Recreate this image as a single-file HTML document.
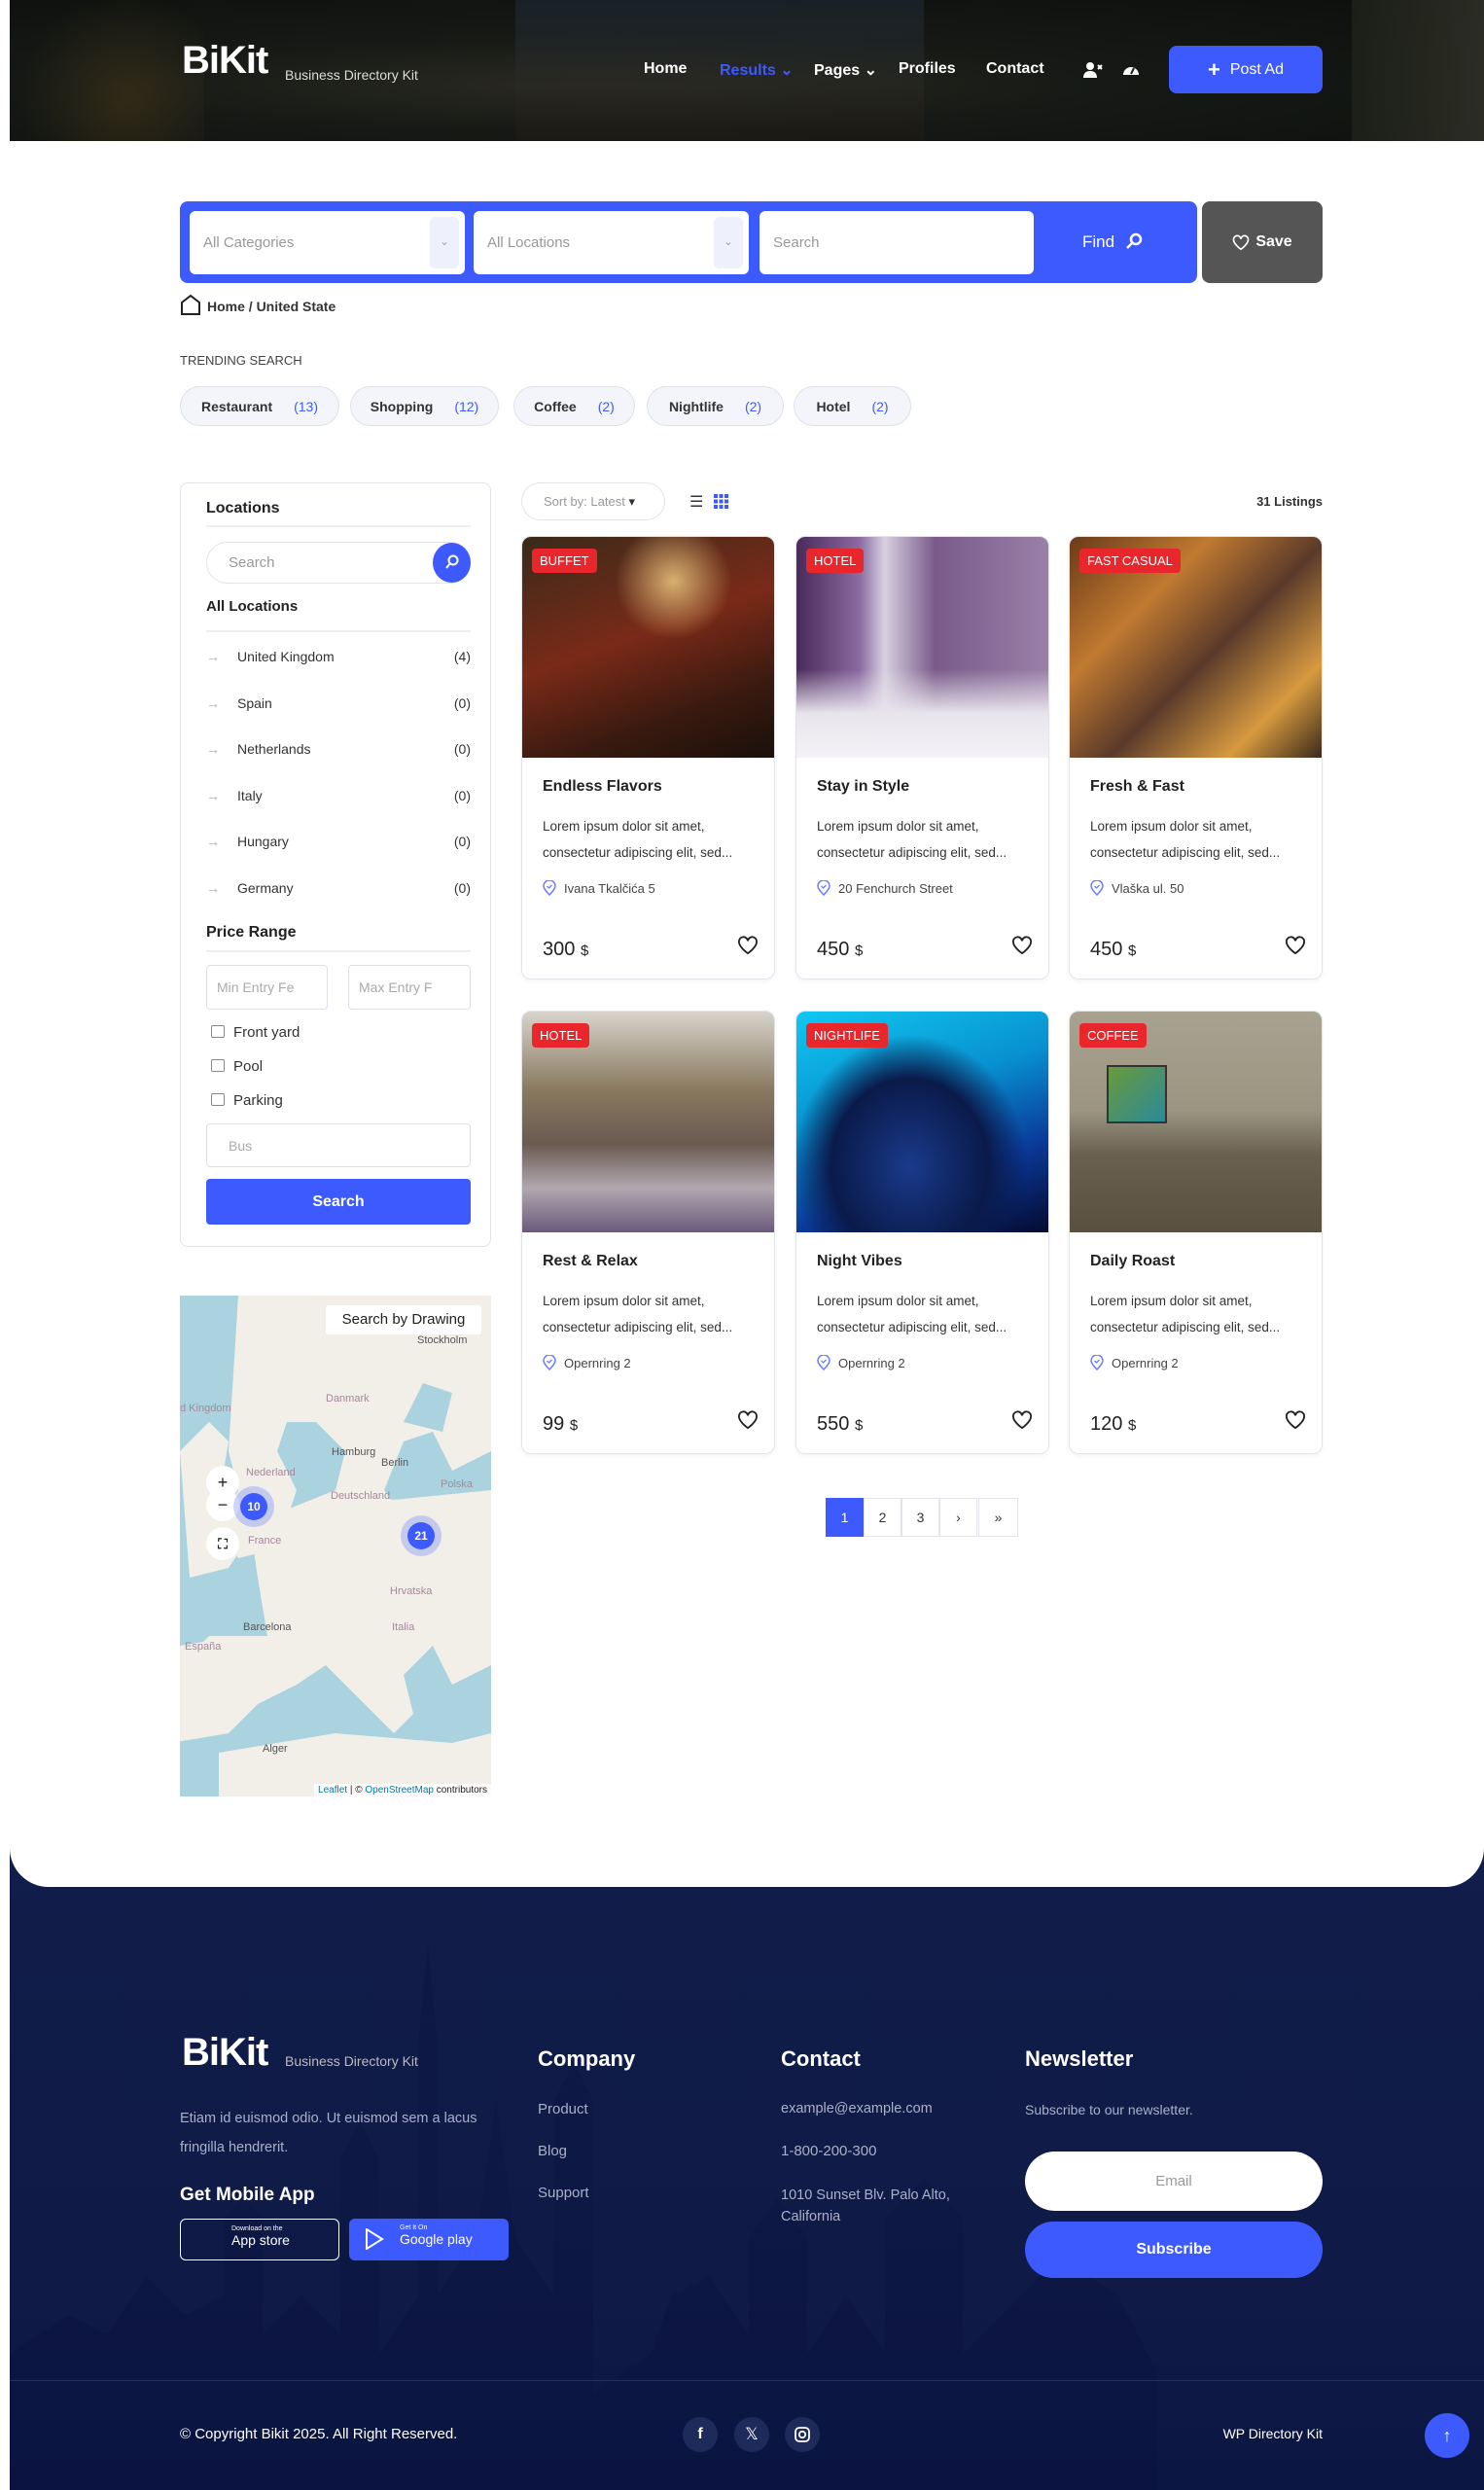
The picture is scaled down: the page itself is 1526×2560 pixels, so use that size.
<!DOCTYPE html>
<html><head><meta charset="utf-8"><style>
*{box-sizing:border-box;margin:0;padding:0}
body{width:1526px;height:2560px;position:relative;background:#fff;font-family:"Liberation Sans",sans-serif;color:#222;overflow:hidden}
.a{position:absolute}
.hdr{left:10px;top:0;width:1516px;height:145px;background:radial-gradient(ellipse at 40% 60%,#2a2a22 0%,#161915 40%,#0c0f0d 100%);overflow:hidden}
.nav{color:#fff;font-weight:bold;font-size:16px;top:62px}
.btn{background:#3d5afe;color:#fff;border-radius:8px;font-weight:bold;display:flex;align-items:center;justify-content:center}
.inp{background:#fff;border-radius:6px;color:#999;font-size:15px;padding-left:14px;display:flex;align-items:center}
.pill{top:397px;height:41px;border:1px solid #dde1ea;background:#f3f5fb;border-radius:21px;font-size:14px;font-weight:bold;color:#333;display:flex;align-items:center;justify-content:center;gap:22px}
.pill b{color:#3d5afe;font-weight:normal}
.side{left:185px;top:496px;width:320px;height:786px;border:1px solid #e2e4ea;border-radius:8px}
.h4{font-weight:bold;font-size:16px;color:#222}
.ln{height:2px;background:#eceef2;width:272px;left:212px}
.li{left:212px;width:272px;font-size:14px;color:#333;display:flex}
.li span:first-child{color:#aaa;width:32px}
.li span:last-child{margin-left:auto}
.card{width:261px;height:456px;border:1px solid #e2e4ea;border-radius:10px;overflow:hidden;box-shadow:0 2px 4px rgba(0,0,0,.05)}
.card .img{height:227px;position:relative}
.badge{position:absolute;left:10px;top:12px;background:#e8262b;color:#fff;font-size:13px;padding:5px 8px;border-radius:4px}
.card h3{position:absolute;left:21px;top:248px;font-size:16px;color:#222}
.card p{position:absolute;left:21px;top:284px;font-size:13.5px;color:#333;line-height:27px;width:230px}
.card .loc{position:absolute;left:21px;top:353px;font-size:13px;color:#444;display:flex;gap:8px;align-items:center}
.card .pr{position:absolute;left:21px;top:413px;font-size:20px;color:#222}
.card .pr small{font-size:15px}
.card .ht{position:absolute;right:16px;top:410px}
.pg{top:1540px;width:39px;height:40px;border:1px solid #e2e4ea;display:flex;align-items:center;justify-content:center;font-size:14px;color:#333}
.ft{color:#fff}
.fl{color:#aab0c8;font-size:15px}
</style></head><body>

<div class="a hdr">
 <div class="a" style="left:520px;top:0;width:420px;height:145px;background:linear-gradient(180deg,#1e2a36,#2a2924 60%,#1e1a14 100%);opacity:.6"></div>
 <div class="a" style="left:0;top:0;width:200px;height:145px;background:radial-gradient(circle at 60% 70%,#4a3c1a,transparent 70%);opacity:.5"></div>
 <div class="a" style="left:1380px;top:0;width:140px;height:145px;background:linear-gradient(90deg,#1e2218,#33332a);opacity:.8"></div>
</div>
<div class="a ft" style="left:187px;top:40px;font-size:40px;font-weight:bold;letter-spacing:-1px">BiKit</div>
<div class="a" style="left:293px;top:69px;font-size:14px;color:#ddd">Business Directory Kit</div>
<div class="a nav" style="left:662px">Home</div>
<div class="a nav" style="left:740px;color:#3d5afe">Results ⌄</div>
<div class="a nav" style="left:837px">Pages ⌄</div>
<div class="a nav" style="left:924px">Profiles</div>
<div class="a nav" style="left:1014px">Contact</div>
<svg class="a" style="left:1113px;top:63px" width="22" height="18" viewBox="0 0 22 18"><circle cx="8" cy="5" r="4" fill="#fff"/><path d="M1 17c0-5 3-7 7-7s7 2 7 7z" fill="#fff"/><path d="M16 4l4 4M20 4l-4 4" stroke="#fff" stroke-width="2"/></svg>
<svg class="a" style="left:1153px;top:63px" width="20" height="18" viewBox="0 0 20 18"><path d="M2 14a8 8 0 1 1 16 0z" fill="#fff"/><path d="M10 13l3-6" stroke="#222" stroke-width="2"/></svg>
<div class="a btn" style="left:1202px;top:47px;width:158px;height:49px;font-size:16px;font-weight:normal"><span style="font-size:22px;font-weight:bold;margin-right:10px">+</span>Post Ad</div>

<div class="a" style="left:185px;top:207px;width:1046px;height:84px;background:#3d5afe;border-radius:8px"></div>
<div class="a inp" style="left:195px;top:217px;width:283px;height:65px">All Categories<span style="position:absolute;right:6px;top:6px;width:30px;height:53px;background:#eef0fb;border-radius:6px;text-align:center;line-height:53px;font-size:11px">⌄</span></div>
<div class="a inp" style="left:487px;top:217px;width:283px;height:65px">All Locations<span style="position:absolute;right:6px;top:6px;width:30px;height:53px;background:#eef0fb;border-radius:6px;text-align:center;line-height:53px;font-size:11px">⌄</span></div>
<div class="a inp" style="left:781px;top:217px;width:282px;height:65px">Search</div>
<div class="a ft" style="left:1113px;top:239px;font-size:17px">Find <svg width="18" height="18" viewBox="0 0 18 18" style="vertical-align:-3px;margin-left:6px"><circle cx="11" cy="7" r="5" fill="none" stroke="#fff" stroke-width="2.5"/><path d="M7 11l-5 5" stroke="#fff" stroke-width="2.5"/></svg></div>
<div class="a" style="left:1236px;top:207px;width:124px;height:84px;background:#555;border-radius:8px;color:#fff;font-weight:bold;font-size:16px;display:flex;align-items:center;justify-content:center;gap:6px"><svg width="18" height="17" viewBox="0 0 24 22"><path d="M12 20S2 13 2 7a5 5 0 0 1 10-1 5 5 0 0 1 10 1c0 6-10 13-10 13z" fill="none" stroke="#fff" stroke-width="2.2"/></svg>Save</div>

<svg class="a" style="left:185px;top:302px" width="22" height="22" viewBox="0 0 22 22"><path d="M2 21V9L11 2l9 7v12z" fill="none" stroke="#222" stroke-width="2"/></svg>
<div class="a" style="left:213px;top:307px;font-size:14px;font-weight:bold;color:#333">Home / United State</div>
<div class="a" style="left:185px;top:363px;font-size:13px;color:#444">TRENDING SEARCH</div>
<div class="a pill" style="left:185px;width:164px">Restaurant <b>(13)</b></div>
<div class="a pill" style="left:360px;width:153px">Shopping <b>(12)</b></div>
<div class="a pill" style="left:528px;width:125px">Coffee <b>(2)</b></div>
<div class="a pill" style="left:665px;width:141px">Nightlife <b>(2)</b></div>
<div class="a pill" style="left:816px;width:121px">Hotel <b>(2)</b></div>

<div class="a side"></div>
<div class="a h4" style="left:212px;top:514px">Locations</div>
<div class="a ln" style="top:540px"></div>
<div class="a" style="left:212px;top:557px;width:272px;height:43px;border:1px solid #e2e4ea;border-radius:22px;color:#999;font-size:15px;padding:12px 22px">Search</div>
<div class="a" style="left:445px;top:558px;width:39px;height:41px;border-radius:50%;background:#3d5afe"><svg width="39" height="41" viewBox="0 0 39 41"><circle cx="21" cy="18" r="4.5" fill="none" stroke="#fff" stroke-width="2"/><path d="M18 21l-4 5" stroke="#fff" stroke-width="2"/></svg></div>
<div class="a h4" style="left:212px;top:615px;font-size:15px">All Locations</div>
<div class="a ln" style="top:648px"></div>
<div class="a li" style="top:667px"><span>→</span><span>United Kingdom</span><span>(4)</span></div>
<div class="a li" style="top:715px"><span>→</span><span>Spain</span><span>(0)</span></div>
<div class="a li" style="top:762px"><span>→</span><span>Netherlands</span><span>(0)</span></div>
<div class="a li" style="top:810px"><span>→</span><span>Italy</span><span>(0)</span></div>
<div class="a li" style="top:857px"><span>→</span><span>Hungary</span><span>(0)</span></div>
<div class="a li" style="top:905px"><span>→</span><span>Germany</span><span>(0)</span></div>
<div class="a h4" style="left:212px;top:950px">Price Range</div>
<div class="a ln" style="top:977px"></div>
<div class="a" style="left:212px;top:992px;width:125px;height:46px;border:1px solid #dcdfe6;border-radius:4px;color:#aaa;font-size:14px;padding:14px 10px">Min Entry Fe</div>
<div class="a" style="left:358px;top:992px;width:126px;height:46px;border:1px solid #dcdfe6;border-radius:4px;color:#aaa;font-size:14px;padding:14px 10px">Max Entry F</div>
<div class="a" style="left:217px;top:1053px;font-size:15px;color:#333"><span style="display:inline-block;width:14px;height:13px;border:1px solid #888;border-radius:2px;vertical-align:-1px;margin-right:9px"></span>Front yard</div>
<div class="a" style="left:217px;top:1088px;font-size:15px;color:#333"><span style="display:inline-block;width:14px;height:13px;border:1px solid #888;border-radius:2px;vertical-align:-1px;margin-right:9px"></span>Pool</div>
<div class="a" style="left:217px;top:1123px;font-size:15px;color:#333"><span style="display:inline-block;width:14px;height:13px;border:1px solid #888;border-radius:2px;vertical-align:-1px;margin-right:9px"></span>Parking</div>
<div class="a" style="left:212px;top:1155px;width:272px;height:45px;border:1px solid #dcdfe6;border-radius:4px;color:#aaa;font-size:14px;padding:14px 22px">Bus</div>
<div class="a btn" style="left:212px;top:1212px;width:272px;height:47px;border-radius:4px;font-size:16px">Search</div>

<div class="a" style="left:185px;top:1332px;width:320px;height:515px;background:#aad3df;overflow:hidden">
<svg width="320" height="515" viewBox="0 0 320 515"><path d="M60 0h260v160l-40 20-20-40-30 10-20 50 20 30-40 10-30-40 10-40-30-30-30 0-10 30 20 40-20 60-40 10-20-30 20-40-10-40z" fill="#f2efe9"/><path d="M0 160l30-30 20 20-10 60 30 40-20 30-40 10z" fill="#f2efe9"/><path d="M70 220l40 0 50-20 60 10 100-10v180l-40 20-20-40-30 30 10 40-20 20-40-40-30-30-30 20-40 20-30 30-60 10v-70l40-40 60 0-10-60z" fill="#f2efe9"/><path d="M0 360l60-10 40 20-20 40-80 10z" fill="#f2efe9"/><path d="M40 470l120-20 120 10 40-10v75H40z" fill="#f2efe9"/><path d="M230 130l20-40 30 10-10 40z" fill="#aad3df"/></svg>
<div class="a" style="left:150px;top:10px;width:160px;height:30px;background:#fff;border-radius:3px;font-size:15px;text-align:center;line-height:30px">Search by Drawing</div>
<div class="a" style="left:244px;top:40px;font-size:11px;color:#555">Stockholm</div>
<div class="a" style="left:150px;top:100px;font-size:11px;color:#a8879a">Danmark</div>
<div class="a" style="left:0;top:110px;font-size:11px;color:#a8879a">d Kingdom</div>
<div class="a" style="left:156px;top:155px;font-size:11px;color:#555">Hamburg</div>
<div class="a" style="left:207px;top:166px;font-size:11px;color:#555">Berlin</div>
<div class="a" style="left:155px;top:200px;font-size:11px;color:#a8879a">Deutschland</div>
<div class="a" style="left:268px;top:188px;font-size:11px;color:#a8879a">Polska</div>
<div class="a" style="left:68px;top:176px;font-size:11px;color:#a8879a">Nederland</div>
<div class="a" style="left:70px;top:246px;font-size:11px;color:#a8879a">France</div>
<div class="a" style="left:65px;top:335px;font-size:11px;color:#555">Barcelona</div>
<div class="a" style="left:5px;top:355px;font-size:11px;color:#a8879a">España</div>
<div class="a" style="left:218px;top:335px;font-size:11px;color:#a8879a">Italia</div>
<div class="a" style="left:216px;top:298px;font-size:11px;color:#a8879a">Hrvatska</div>
<div class="a" style="left:85px;top:460px;font-size:11px;color:#555">Alger</div>
<div class="a" style="left:27px;top:175px;width:34px;height:34px;border-radius:50%;background:#fff;text-align:center;line-height:34px;font-size:18px">+</div>
<div class="a" style="left:27px;top:200px;width:34px;height:34px;border-radius:50%;background:#fff;text-align:center;line-height:34px;font-size:18px;top:198px">−</div>
<div class="a" style="left:27px;top:238px;width:34px;height:34px;border-radius:50%;background:#fff;text-align:center;line-height:34px;font-size:14px;font-weight:bold">⛶</div>
<div class="a" style="left:55px;top:196px;width:42px;height:42px;border-radius:50%;background:rgba(61,90,254,.25)"></div>
<div class="a" style="left:62px;top:203px;width:28px;height:28px;border-radius:50%;background:#3d5afe;color:#fff;font-size:12px;font-weight:bold;text-align:center;line-height:28px">10</div>
<div class="a" style="left:227px;top:226px;width:42px;height:42px;border-radius:50%;background:rgba(61,90,254,.25)"></div>
<div class="a" style="left:234px;top:233px;width:28px;height:28px;border-radius:50%;background:#3d5afe;color:#fff;font-size:12px;font-weight:bold;text-align:center;line-height:28px">21</div>
<div class="a" style="right:0;bottom:0;background:rgba(255,255,255,.8);font-size:10px;padding:1px 4px"><span style="color:#0078a8">Leaflet</span> | © <span style="color:#0078a8">OpenStreetMap</span> contributors</div>
</div>

<div class="a" style="left:536px;top:496px;width:148px;height:39px;border:1px solid #e2e4ea;border-radius:20px;font-size:13px;color:#999;padding:11px 22px">Sort by: Latest <span style="color:#333">▾</span></div>
<div class="a" style="left:709px;top:506px;font-size:16px;color:#333">☰</div>
<svg class="a" style="left:734px;top:508px" width="15" height="15" viewBox="0 0 15 15" fill="#3d5afe"><rect x="0" y="0" width="4" height="4"/><rect x="5.5" y="0" width="4" height="4"/><rect x="11" y="0" width="4" height="4"/><rect x="0" y="5.5" width="4" height="4"/><rect x="5.5" y="5.5" width="4" height="4"/><rect x="11" y="5.5" width="4" height="4"/><rect x="0" y="11" width="4" height="4"/><rect x="5.5" y="11" width="4" height="4"/><rect x="11" y="11" width="4" height="4"/></svg>
<div class="a" style="left:1260px;top:508px;width:100px;text-align:right;font-size:13px;font-weight:bold;color:#333">31 Listings</div>

<div class="a card" style="left:536px;top:551px"><div class="img" style="background:radial-gradient(circle at 60% 20%,#d9b070 0%,transparent 25%),linear-gradient(160deg,#3a2a1a 0%,#7a2a18 45%,#3a1a10 75%,#1a100a 100%)"><span class="badge">BUFFET</span></div><h3>Endless Flavors</h3><p>Lorem ipsum dolor sit amet, consectetur adipiscing elit, sed...</p><div class="loc"><svg width="14" height="16" viewBox="0 0 14 16"><path d="M7 15S1 9 1 6a6 6 0 0 1 12 0c0 3-6 9-6 9z" fill="none" stroke="#6a7cff" stroke-width="1.5"/><path d="M4.5 6l2 2 3-3" fill="none" stroke="#6a7cff" stroke-width="1.3"/></svg>Ivana Tkalčića 5</div><div class="pr">300 <small>$</small></div><svg class="ht" width="22" height="20" viewBox="0 0 24 22"><path d="M12 20S2 13 2 7a5 5 0 0 1 10-1 5 5 0 0 1 10 1c0 6-10 13-10 13z" fill="none" stroke="#222" stroke-width="2"/></svg></div>
<div class="a card" style="left:818px;top:551px"><div class="img" style="background:linear-gradient(180deg,transparent 60%,#e8e4ec 80%,#f4f2f6 100%),linear-gradient(90deg,#4a2a5a 0%,#8a6aa0 25%,#d8d0e0 35%,#7a5a8a 55%,#9a80a8 100%)"><span class="badge">HOTEL</span></div><h3>Stay in Style</h3><p>Lorem ipsum dolor sit amet, consectetur adipiscing elit, sed...</p><div class="loc"><svg width="14" height="16" viewBox="0 0 14 16"><path d="M7 15S1 9 1 6a6 6 0 0 1 12 0c0 3-6 9-6 9z" fill="none" stroke="#6a7cff" stroke-width="1.5"/><path d="M4.5 6l2 2 3-3" fill="none" stroke="#6a7cff" stroke-width="1.3"/></svg>20 Fenchurch Street</div><div class="pr">450 <small>$</small></div><svg class="ht" width="22" height="20" viewBox="0 0 24 22"><path d="M12 20S2 13 2 7a5 5 0 0 1 10-1 5 5 0 0 1 10 1c0 6-10 13-10 13z" fill="none" stroke="#222" stroke-width="2"/></svg></div>
<div class="a card" style="left:1099px;top:551px"><div class="img" style="background:linear-gradient(135deg,#6a3a18 0%,#c07a30 30%,#5a3a2a 55%,#d89a40 80%,#3a2a1a 100%)"><span class="badge">FAST CASUAL</span></div><h3>Fresh &amp; Fast</h3><p>Lorem ipsum dolor sit amet, consectetur adipiscing elit, sed...</p><div class="loc"><svg width="14" height="16" viewBox="0 0 14 16"><path d="M7 15S1 9 1 6a6 6 0 0 1 12 0c0 3-6 9-6 9z" fill="none" stroke="#6a7cff" stroke-width="1.5"/><path d="M4.5 6l2 2 3-3" fill="none" stroke="#6a7cff" stroke-width="1.3"/></svg>Vlaška ul. 50</div><div class="pr">450 <small>$</small></div><svg class="ht" width="22" height="20" viewBox="0 0 24 22"><path d="M12 20S2 13 2 7a5 5 0 0 1 10-1 5 5 0 0 1 10 1c0 6-10 13-10 13z" fill="none" stroke="#222" stroke-width="2"/></svg></div>

<div class="a card" style="left:536px;top:1039px"><div class="img" style="background:linear-gradient(180deg,#d8d4cc 0%,#8a7a60 35%,#6a5a50 60%,#b0a8b0 80%,#6a5a7a 100%)"><span class="badge">HOTEL</span></div><h3>Rest &amp; Relax</h3><p>Lorem ipsum dolor sit amet, consectetur adipiscing elit, sed...</p><div class="loc"><svg width="14" height="16" viewBox="0 0 14 16"><path d="M7 15S1 9 1 6a6 6 0 0 1 12 0c0 3-6 9-6 9z" fill="none" stroke="#6a7cff" stroke-width="1.5"/><path d="M4.5 6l2 2 3-3" fill="none" stroke="#6a7cff" stroke-width="1.3"/></svg>Opernring 2</div><div class="pr">99 <small>$</small></div><svg class="ht" width="22" height="20" viewBox="0 0 24 22"><path d="M12 20S2 13 2 7a5 5 0 0 1 10-1 5 5 0 0 1 10 1c0 6-10 13-10 13z" fill="none" stroke="#222" stroke-width="2"/></svg></div>
<div class="a card" style="left:818px;top:1039px"><div class="img" style="background:radial-gradient(ellipse at 45% 70%,#1a3a8a 0%,#0a1a4a 40%,transparent 60%),linear-gradient(160deg,#10c8f0 0%,#0890d0 40%,#0a3a9a 70%,#050a30 100%)"><span class="badge">NIGHTLIFE</span></div><h3>Night Vibes</h3><p>Lorem ipsum dolor sit amet, consectetur adipiscing elit, sed...</p><div class="loc"><svg width="14" height="16" viewBox="0 0 14 16"><path d="M7 15S1 9 1 6a6 6 0 0 1 12 0c0 3-6 9-6 9z" fill="none" stroke="#6a7cff" stroke-width="1.5"/><path d="M4.5 6l2 2 3-3" fill="none" stroke="#6a7cff" stroke-width="1.3"/></svg>Opernring 2</div><div class="pr">550 <small>$</small></div><svg class="ht" width="22" height="20" viewBox="0 0 24 22"><path d="M12 20S2 13 2 7a5 5 0 0 1 10-1 5 5 0 0 1 10 1c0 6-10 13-10 13z" fill="none" stroke="#222" stroke-width="2"/></svg></div>
<div class="a card" style="left:1099px;top:1039px"><div class="img" style="background:linear-gradient(180deg,#a8a290 0%,#9a9480 45%,#6a6050 65%,#5a5040 100%)"><div class="a" style="left:38px;top:55px;width:62px;height:60px;background:linear-gradient(135deg,#6a9a3a,#2a8a9a);border:2px solid #333"></div><span class="badge">COFFEE</span></div><h3>Daily Roast</h3><p>Lorem ipsum dolor sit amet, consectetur adipiscing elit, sed...</p><div class="loc"><svg width="14" height="16" viewBox="0 0 14 16"><path d="M7 15S1 9 1 6a6 6 0 0 1 12 0c0 3-6 9-6 9z" fill="none" stroke="#6a7cff" stroke-width="1.5"/><path d="M4.5 6l2 2 3-3" fill="none" stroke="#6a7cff" stroke-width="1.3"/></svg>Opernring 2</div><div class="pr">120 <small>$</small></div><svg class="ht" width="22" height="20" viewBox="0 0 24 22"><path d="M12 20S2 13 2 7a5 5 0 0 1 10-1 5 5 0 0 1 10 1c0 6-10 13-10 13z" fill="none" stroke="#222" stroke-width="2"/></svg></div>

<div class="a pg" style="left:849px;background:#3d5afe;color:#fff;border-color:#3d5afe">1</div>
<div class="a pg" style="left:888px">2</div>
<div class="a pg" style="left:927px">3</div>
<div class="a pg" style="left:966px">›</div>
<div class="a pg" style="left:1006px;width:41px">»</div>

<div class="a" style="left:10px;top:1880px;width:1516px;height:680px;background:linear-gradient(180deg,#111d4a 0%,#101a46 70%,#0c1642 100%)"></div>
<svg class="a" style="left:10px;top:1980px;opacity:.35" width="1516" height="580" viewBox="0 0 1516 580"><path d="M0 580V440l60-40 40 20 40-60 40 40 40-20V300l20-20 20 20v120l40-40 40 40V240l20-40 20 40v200l40-60V120l10-100 10 100v260l40-60 20-140 20 140 40 60V180l20-40 20 40v300l60-40 20-60 40-20 40 60V320l30-40 30 40v120l40-60 40 60V300l40-40 40 40v140l60-60 40-40 60 40 40 80V580z" fill="#0a1340"/></svg>
<div class="a" style="left:10px;top:1860px;width:1516px;height:80px;background:#fff;border-radius:0 0 40px 40px"></div>

<div class="a ft" style="left:187px;top:2088px;font-size:40px;font-weight:bold;letter-spacing:-1px">BiKit</div>
<div class="a" style="left:293px;top:2111px;font-size:14px;color:#bbb">Business Directory Kit</div>
<div class="a fl" style="left:185px;top:2163px;width:350px;line-height:30px;font-size:14.5px">Etiam id euismod odio. Ut euismod sem a lacus fringilla hendrerit.</div>
<div class="a ft" style="left:185px;top:2246px;font-size:19px;font-weight:bold">Get Mobile App</div>
<div class="a" style="left:185px;top:2281px;width:164px;height:43px;border:1px solid #fff;border-radius:6px;color:#fff;padding:6px 0 0 52px"><span style="position:absolute;left:16px;top:6px;font-size:24px"></span><div style="font-size:7px">Download on the</div><div style="font-size:14px">App store</div></div>
<div class="a" style="left:359px;top:2281px;width:164px;height:43px;background:#3d5afe;border-radius:6px;color:#fff;padding:6px 0 0 52px"><svg class="a" style="left:16px;top:10px" width="20" height="22" viewBox="0 0 20 22"><path d="M2 1l16 10L2 21z" fill="none" stroke="#fff" stroke-width="2"/></svg><div style="font-size:7px">Get It On</div><div style="font-size:14px">Google play</div></div>
<div class="a ft" style="left:553px;top:2104px;font-size:22px;font-weight:bold">Company</div>
<div class="a fl" style="left:553px;top:2160px">Product</div>
<div class="a fl" style="left:553px;top:2203px">Blog</div>
<div class="a fl" style="left:553px;top:2246px">Support</div>
<div class="a ft" style="left:803px;top:2104px;font-size:22px;font-weight:bold">Contact</div>
<div class="a fl" style="left:803px;top:2160px;font-size:14.5px">example@example.com</div>
<div class="a fl" style="left:803px;top:2203px">1-800-200-300</div>
<div class="a fl" style="left:803px;top:2246px;width:200px;line-height:22px;font-size:14.5px">1010 Sunset Blv. Palo Alto, California</div>
<div class="a ft" style="left:1054px;top:2104px;font-size:22px;font-weight:bold">Newsletter</div>
<div class="a fl" style="left:1054px;top:2161px;font-size:14px">Subscribe to our newsletter.</div>
<div class="a" style="left:1054px;top:2212px;width:306px;height:61px;background:#fff;border-radius:31px;text-align:center;line-height:61px;color:#999;font-size:15px">Email</div>
<div class="a btn" style="left:1054px;top:2284px;width:306px;height:58px;border-radius:29px;font-size:16px">Subscribe</div>
<div class="a" style="left:10px;top:2447px;width:1516px;height:1px;background:#243068"></div>
<div class="a ft" style="left:185px;top:2494px;font-size:15px">© Copyright Bikit 2025. All Right Reserved.</div>
<div class="a" style="left:702px;top:2485px;width:36px;height:36px;border-radius:50%;background:#1e2a5a;color:#fff;text-align:center;line-height:36px;font-weight:bold;font-size:16px">f</div>
<div class="a" style="left:755px;top:2485px;width:36px;height:36px;border-radius:50%;background:#1e2a5a;color:#fff;text-align:center;line-height:36px;font-size:17px">𝕏</div>
<div class="a" style="left:807px;top:2485px;width:36px;height:36px;border-radius:50%;background:#1e2a5a"><svg width="36" height="36" viewBox="0 0 36 36"><rect x="11" y="11" width="14" height="14" rx="4" fill="none" stroke="#fff" stroke-width="1.8"/><circle cx="18" cy="18" r="3.2" fill="none" stroke="#fff" stroke-width="1.8"/></svg></div>
<div class="a ft" style="left:1200px;top:2494px;width:160px;text-align:right;font-size:14px">WP Directory Kit</div>
<div class="a" style="left:1465px;top:2481px;width:46px;height:46px;border-radius:50%;background:#3d5afe;color:#fff;text-align:center;line-height:46px;font-size:18px">↑</div>
</body></html>
